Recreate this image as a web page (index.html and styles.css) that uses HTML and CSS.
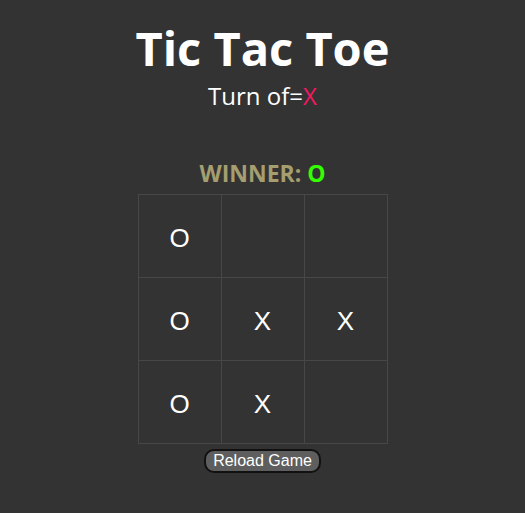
FILE: index.html
```html
<!DOCTYPE html>
<html>
<head>
<meta charset="utf-8">
<link rel="stylesheet" href="styles.css">
</head>
<body>
<div class="app">
  <h1 class="title">Tic Tac Toe</h1>
  <div class="turn">Turn of=<span class="turn-x">X</span></div>
  <div class="winner">WINNER: <span class="winner-o">O</span></div>
  <div class="board">
    <div class="cell">O</div>
    <div class="cell"></div>
    <div class="cell"></div>
    <div class="cell">O</div>
    <div class="cell">X</div>
    <div class="cell">X</div>
    <div class="cell">O</div>
    <div class="cell">X</div>
    <div class="cell"></div>
  </div>
  <button class="reload">Reload Game</button>
</div>
</body>
</html>
```
FILE: styles.css
```css
html, body {
  margin: 0;
  padding: 0;
  background: #333333;
  height: 100%;
}
.app {
  display: flex;
  flex-direction: column;
  align-items: center;
  font-family: "Open Sans", "Noto Sans", sans-serif;
  color: #ffffff;
}
.title {
  margin: 18px 0 0;
  font-size: 47px;
  font-weight: 700;
  line-height: 60px;
}
.turn {
  margin-top: 3px;
  font-size: 24px;
  line-height: 30px;
}
.turn-x {
  color: #f5185f;
}
.winner {
  margin-top: 48px;
  margin-bottom: 7px;
  font-size: 23px;
  font-weight: 700;
  line-height: 28px;
  color: #a59e6e;
}
.winner-o {
  color: #33ff00;
}
.board {
  display: grid;
  grid-template-columns: repeat(3, 83px);
  grid-template-rows: repeat(3, 83px);
  border-left: 1px solid #474747;
  border-top: 1px solid #474747;
}
.cell {
  display: flex;
  align-items: center;
  justify-content: center;
  padding-top: 5px;
  box-sizing: border-box;
  border-right: 1px solid #474747;
  border-bottom: 1px solid #474747;
  font-family: "Liberation Sans", Arial, sans-serif;
  font-size: 26px;
  color: #ffffff;
}
.reload {
  margin-top: 5px;
  font-family: "Liberation Sans", Arial, sans-serif;
  font-size: 16px;
  color: #ffffff;
  background: #5e5e5e;
  border: 2px solid #111111;
  border-radius: 10px;
  padding: 1px 7px;
  height: 24px;
  line-height: 18px;
}
```
